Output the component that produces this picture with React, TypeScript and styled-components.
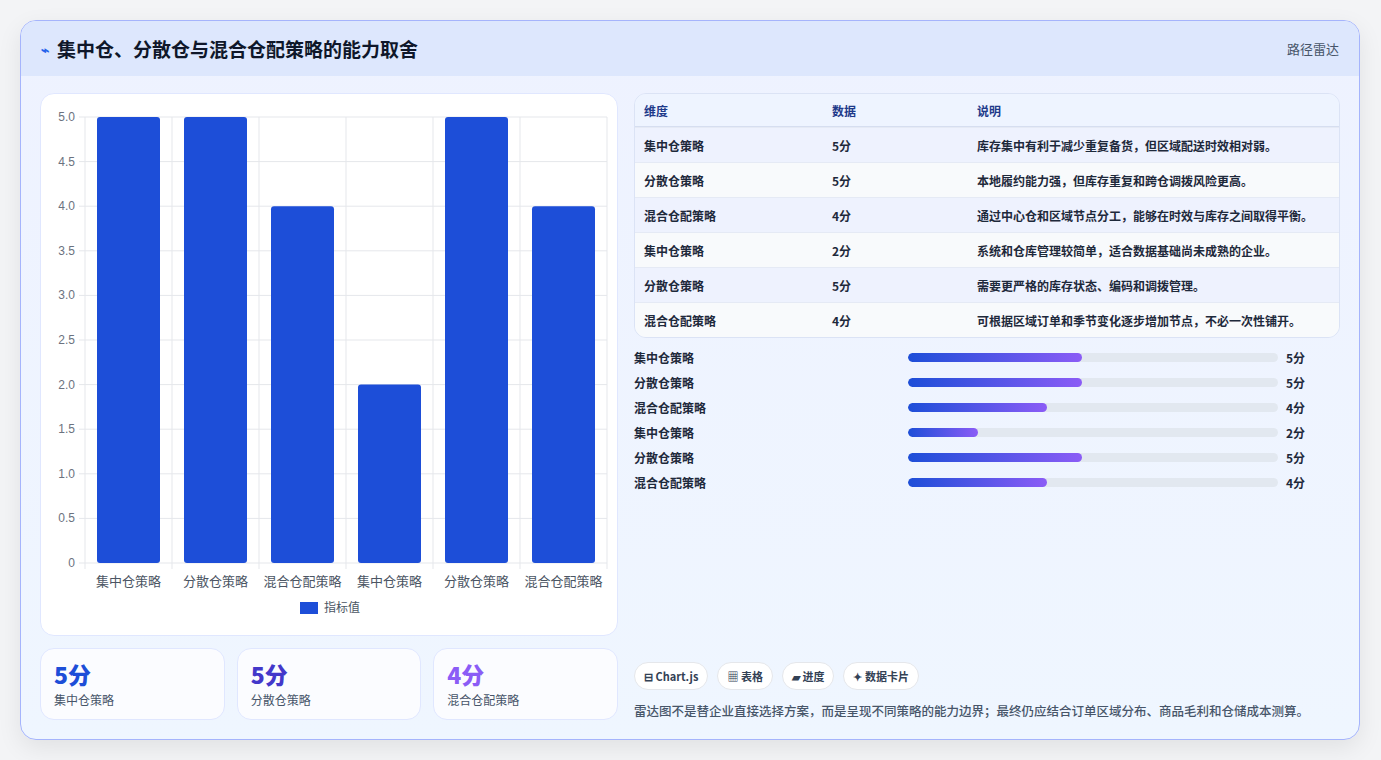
import React from "react";
import styled, { createGlobalStyle } from "styled-components";

const Global = createGlobalStyle`
  body { margin: 0; background: #f3f4f6; font-family: "Noto Sans CJK SC", "Noto Sans", sans-serif; }
`;

const rows = [
  { name: "集中仓策略", v: 5, note: "库存集中有利于减少重复备货，但区域配送时效相对弱。" },
  { name: "分散仓策略", v: 5, note: "本地履约能力强，但库存重复和跨仓调拨风险更高。" },
  { name: "混合仓配策略", v: 4, note: "通过中心仓和区域节点分工，能够在时效与库存之间取得平衡。" },
  { name: "集中仓策略", v: 2, note: "系统和仓库管理较简单，适合数据基础尚未成熟的企业。" },
  { name: "分散仓策略", v: 5, note: "需要更严格的库存状态、编码和调拨管理。" },
  { name: "混合仓配策略", v: 4, note: "可根据区域订单和季节变化逐步增加节点，不必一次性铺开。" },
];

const Chart = () => {
  const x0 = 44, x1 = 566, y0 = 23, y1 = 469;
  const cw = (x1 - x0) / 6;
  const ticks = [0, 0.5, 1, 1.5, 2, 2.5, 3, 3.5, 4, 4.5, 5];
  const yy = (v: number) => y1 - (v / 5) * (y1 - y0);
  return (
    <svg width="578" height="543" style={{ display: "block" }}>
      {ticks.map((t) => (
        <g key={t}>
          <line x1={x0 - 6} x2={x1} y1={yy(t)} y2={yy(t)} stroke="#e5e7eb" />
          <text x={x0 - 10} y={yy(t) + 4} textAnchor="end" fontSize="12" fill="#6b7280" fontFamily="Liberation Sans, sans-serif">
            {t === 0 ? "0" : t.toFixed(1)}
          </text>
        </g>
      ))}
      {Array.from({ length: 7 }).map((_, i) => (
        <line key={i} x1={x0 + i * cw} x2={x0 + i * cw} y1={y0} y2={y1 + 6} stroke="#e5e7eb" />
      ))}
      {rows.map((r, i) => (
        <g key={i}>
          <rect x={x0 + i * cw + 12} y={yy(r.v)} width={cw - 24} height={y1 - yy(r.v)} rx="3" fill="#1d4ed8" />
          <text x={x0 + i * cw + cw / 2} y={492} textAnchor="middle" fontSize="13" fill="#4b5563">{r.name}</text>
        </g>
      ))}
      <rect x="259" y="508" width="18" height="12" fill="#1d4ed8" />
      <text x="283" y="518" fontSize="12" fill="#4b5563">指标值</text>
    </svg>
  );
};

export default function App() {
  return (
    <>
      <Global />
      <Page>
        <Card>
          <Header>
            <Title><Spark>⌁</Spark>集中仓、分散仓与混合仓配策略的能力取舍</Title>
            <Tag>路径雷达</Tag>
          </Header>
          <Body>
            <LeftCol>
              <ChartCard><Chart /></ChartCard>
              <Stats>
                <Stat><StatNum $c="#1d4ed8">5分</StatNum><StatLabel>集中仓策略</StatLabel></Stat>
                <Stat><StatNum $c="#4338ca">5分</StatNum><StatLabel>分散仓策略</StatLabel></Stat>
                <Stat><StatNum $c="#8b5cf6">4分</StatNum><StatLabel>混合仓配策略</StatLabel></Stat>
              </Stats>
            </LeftCol>
            <RightCol>
              <Table>
                <thead>
                  <tr><Th style={{ width: 170 }}>维度</Th><Th style={{ width: 127 }}>数据</Th><Th>说明</Th></tr>
                </thead>
                <tbody>
                  {rows.map((r, i) => (
                    <Tr key={i} $odd={i % 2 === 0}>
                      <Td>{r.name}</Td><Td>{r.v}分</Td><Td>{r.note}</Td>
                    </Tr>
                  ))}
                </tbody>
              </Table>
              <Bars>
                {rows.map((r, i) => (
                  <BarRow key={i}>
                    <BarLabel>{r.name}</BarLabel>
                    <Track><Fill style={{ width: `${r.v * 9.4}%` }} /></Track>
                    <BarVal>{r.v}分</BarVal>
                  </BarRow>
                ))}
              </Bars>
              <Spacer />
              <Chips>
                <Chip>⊟ Chart.js</Chip>
                <Chip>▦ 表格</Chip>
                <Chip>▰ 进度</Chip>
                <Chip>✦ 数据卡片</Chip>
              </Chips>
              <Foot>雷达图不是替企业直接选择方案，而是呈现不同策略的能力边界；最终仍应结合订单区域分布、商品毛利和仓储成本测算。</Foot>
            </RightCol>
          </Body>
        </Card>
      </Page>
    </>
  );
}

const Page = styled.div`
  padding: 20px 21px 20px 20px;
`;
const Card = styled.div`
  width: 1340px;
  height: 720px;
  box-sizing: border-box;
  border: 1px solid #a5b4fc;
  border-radius: 16px;
  overflow: hidden;
  background: linear-gradient(180deg, #eef2ff, #eff6ff);
  box-shadow: 0 8px 24px rgba(0, 0, 0, 0.08);
  display: flex;
  flex-direction: column;
`;
const Header = styled.div`
  height: 55px;
  background: #dde7fd;
  display: flex;
  align-items: center;
  justify-content: space-between;
  padding: 0 20px;
`;
const Title = styled.div`
  font-size: 19px;
  font-weight: 700;
  color: #0f172a;
  display: flex;
  align-items: center;
  gap: 8px;
`;
const Spark = styled.span`
  color: #2563eb;
  font-size: 14px;
`;
const Tag = styled.div`
  font-size: 13px;
  color: #475569;
`;
const Body = styled.div`
  flex: 1;
  display: grid;
  grid-template-columns: 578px 1fr;
  gap: 16px;
  padding: 17px 19px 19px 19px;
`;
const LeftCol = styled.div`
  display: flex;
  flex-direction: column;
  gap: 12px;
`;
const ChartCard = styled.div`
  height: 543px;
  background: #fff;
  border: 1px solid #e0e7ff;
  border-radius: 14px;
  box-sizing: border-box;
  overflow: hidden;
`;
const Stats = styled.div`
  display: grid;
  grid-template-columns: repeat(3, 1fr);
  gap: 12px;
`;
const Stat = styled.div`
  height: 72px;
  box-sizing: border-box;
  background: #fbfcff;
  border: 1px solid #e0e7ff;
  border-radius: 14px;
  padding: 10px 13px;
`;
const StatNum = styled.div<{ $c: string }>`
  font-size: 23px;
  font-weight: 800;
  color: ${(p) => p.$c};
  line-height: 30px;
`;
const StatLabel = styled.div`
  font-size: 12px;
  color: #475569;
  margin-top: 2px;
`;
const RightCol = styled.div`
  display: flex;
  flex-direction: column;
`;
const Table = styled.table`
  width: 100%;
  border-collapse: separate;
  border-spacing: 0;
  border: 1px solid #dbe3f5;
  border-radius: 12px;
  overflow: hidden;
  font-size: 12px;
  color: #1e293b;
`;
const Th = styled.th`
  text-align: left;
  height: 32px;
  padding: 0 9px;
  color: #1e3a8a;
  font-weight: 600;
  background: #eef4ff;
  border-bottom: 1px solid #d6def0;
`;
const Tr = styled.tr<{ $odd: boolean }>`
  background: ${(p) => (p.$odd ? "#eef2fe" : "#f8fafc")};
`;
const Td = styled.td`
  height: 34px;
  padding: 0 9px;
  font-weight: 600;
  border-top: 1px solid #e5eaf5;
`;
const Bars = styled.div`
  margin-top: 10px;
  display: flex;
  flex-direction: column;
  gap: 7px;
`;
const BarRow = styled.div`
  display: grid;
  grid-template-columns: 266px 370px 1fr;
  gap: 8px;
  align-items: center;
  height: 18px;
`;
const BarLabel = styled.div`
  font-size: 12px;
  font-weight: 600;
  color: #1e293b;
`;
const Track = styled.div`
  height: 9px;
  border-radius: 5px;
  background: #e2e8f0;
  overflow: hidden;
`;
const Fill = styled.div`
  height: 100%;
  border-radius: 5px;
  background: linear-gradient(90deg, #1d4ed8, #8b5cf6);
`;
const BarVal = styled.div`
  font-size: 12px;
  font-weight: 700;
  color: #1e293b;
`;
const Spacer = styled.div`
  flex: 1;
`;
const Chips = styled.div`
  display: flex;
  gap: 9px;
`;
const Chip = styled.div`
  height: 28px;
  box-sizing: border-box;
  padding: 0 9px;
  border-radius: 14px;
  background: #fff;
  border: 1px solid #e5e7eb;
  font-size: 11px;
  font-weight: 700;
  color: #334155;
  display: flex;
  align-items: center;
`;
const Foot = styled.div`
  margin-top: 12px;
  font-size: 12.5px;
  color: #475569;
  font-weight: 500;
  line-height: 18px;
`;
